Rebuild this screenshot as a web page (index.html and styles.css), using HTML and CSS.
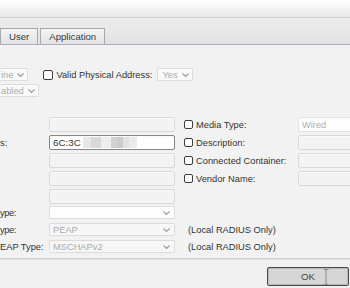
FILE: index.html
```html
<!DOCTYPE html>
<html lang="en">
<head>
    <meta charset="UTF-8">
    <meta name="viewport" content="width=device-width, initial-scale=1.0">
    <title>Endpoint Details</title>
    <link rel="stylesheet" href="styles.css">
</head>
<body>
    <div class="titlebar"></div>

    <div class="tabbar">
        <div class="tab">User</div>
        <div class="tab">Application</div>
    </div>

    <div class="panel">
        <div class="status">
            <div class="status-row">
                <span class="select">ine <svg class="chev" viewBox="0 0 7 4"><polyline points="0.5,0.5 3.5,3.5 6.5,0.5"/></svg></span>
                <span class="check check-gap"></span>
                <span class="label">Valid Physical Address:</span>
                <span class="select select-gap">Yes <svg class="chev" viewBox="0 0 7 4"><polyline points="0.5,0.5 3.5,3.5 6.5,0.5"/></svg></span>
            </div>
            <div class="status-row">
                <span class="select">abled <svg class="chev" viewBox="0 0 7 4"><polyline points="0.5,0.5 3.5,3.5 6.5,0.5"/></svg></span>
            </div>
        </div>

        <div class="fields">
            <div class="label"></div>
            <div class="input"></div>
            <div class="opt"><span class="check"></span>Media Type:</div>
            <div class="input input-light">Wired</div>

            <div class="label">s:</div>
            <div class="input input-focus">6C:3C <span class="blur"></span></div>
            <div class="opt"><span class="check"></span>Description:</div>
            <div class="input"></div>

            <div class="label"></div>
            <div class="input"></div>
            <div class="opt"><span class="check"></span>Connected Container:</div>
            <div class="input"></div>

            <div class="label"></div>
            <div class="input"></div>
            <div class="opt"><span class="check"></span>Vendor Name:</div>
            <div class="input"></div>

            <div class="label"></div>
            <div class="input"></div>
            <div></div>
            <div></div>
        </div>

        <div class="eap">
            <div class="label label-cut">ype:</div>
            <div class="select select-wide select-white"><span></span><svg class="chev" viewBox="0 0 7 4"><polyline points="0.5,0.5 3.5,3.5 6.5,0.5"/></svg></div>
            <div></div>

            <div class="label label-cut">ype:</div>
            <div class="select select-wide">PEAP <svg class="chev" viewBox="0 0 7 4"><polyline points="0.5,0.5 3.5,3.5 6.5,0.5"/></svg></div>
            <div class="note">(Local RADIUS Only)</div>

            <div class="label">EAP Type:</div>
            <div class="select select-wide">MSCHAPv2 <svg class="chev" viewBox="0 0 7 4"><polyline points="0.5,0.5 3.5,3.5 6.5,0.5"/></svg></div>
            <div class="note">(Local RADIUS Only)</div>
        </div>
    </div>

    <div class="footer">
        <button class="ok-btn">OK</button>
        <!-- mouse cursor sitting over the button -->
        <svg class="cursor" viewBox="0 0 6 16"><path d="M0.5 0.5h5M3 0.5v15M0.5 15.5h5"/></svg>
    </div>
</body>
</html>
```

FILE: styles.css
```css
* {
    box-sizing: border-box;
}
body {
    margin: 0;
    width: 350px;
    height: 288px;
    overflow: hidden;
    background-color: #f0f0f0;
    font-family: "Liberation Sans", Arial, sans-serif;
    font-size: 9.3px;
    color: #333;
}
.titlebar {
    height: 18px;
    background: linear-gradient(#fefefe, #e9e9e9);
    border-bottom: 1px solid #d0d0d0;
}
.tabbar {
    height: 27px;
    display: flex;
    align-items: flex-end;
    gap: 2px;
    background: linear-gradient(#ededed, #e2e2e2);
    border-bottom: 1px solid #a9b3bf;
}
.tab {
    height: 16px;
    padding: 0 8px;
    border: 1px solid #a8a8a8;
    border-bottom: none;
    background: linear-gradient(#f4f4f4, #e3e3e3);
    line-height: 15px;
    font-size: 9.6px;
    color: #3a3a3a;
}
.panel {
    background-color: #f2f2f2;
    padding: 23px 0 5px;
    border-bottom: 1px solid #cdcdcd;
    box-shadow: 0 1px 0 #e3e3e3;
}
.status {
    display: flex;
    flex-direction: column;
    gap: 3px;
    margin-left: -4px;
}
.status-row {
    display: flex;
    align-items: center;
    height: 13px;
}
.select {
    display: inline-flex;
    align-items: center;
    gap: 4px;
    height: 13px;
    padding: 0 3px 0 4px;
    border: 1px solid #dcdcdc;
    border-radius: 1px;
    background-color: #f9f9f9;
    color: #ababab;
}
.select-gap {
    margin-left: 5px;
}
.chev {
    width: 7px;
    height: 4px;
    fill: none;
    stroke: #9a9a9a;
    stroke-width: 1.1;
}
.check {
    display: inline-block;
    width: 10px;
    height: 10px;
    border: 1px solid #3d3d3d;
    border-radius: 2px;
    background-color: #fff;
    flex-shrink: 0;
}
.check-gap {
    margin: 0 3px 0 15px;
}
.fields, .eap {
    display: grid;
}
.fields {
    grid-template-columns: 49px 126px 123px 60px;
    margin-top: 20px;
    grid-auto-rows: 15px;
    row-gap: 3px;
}
.eap {
    grid-template-columns: 49px 126px 175px;
    margin-top: 2px;
    grid-auto-rows: 13px;
    row-gap: 4px;
}
.label {
    display: flex;
    align-items: center;
    white-space: nowrap;
}
.label-cut {
    letter-spacing: -0.4px;
}
.input {
    display: flex;
    align-items: center;
    padding: 0 3px;
    border: 1px solid #d9d9d9;
    border-radius: 2px;
    background-color: #f3f3f3;
    box-shadow: inset 0 1px 0 #fafafa;
    color: #b0b0b0;
}
.input-light {
    background-color: #fdfdfd;
    border-color: #e3e3e3;
}
.input-focus {
    border-color: #868686;
    background-color: #fff;
    color: #333;
    gap: 2px;
    font-size: 9.8px;
}
.blur {
    width: 54px;
    height: 11px;
    background: linear-gradient(90deg,
        #e7e7e7 0 8px, #d9d9d9 8px 18px, #eeeeee 18px 28px,
        #d3d3d3 28px 34px, #cbcbcb 34px 40px, #e1e1e1 40px 46px, #ebebeb 46px 54px);
}
.opt {
    display: flex;
    align-items: center;
    gap: 3px;
    padding-left: 9px;
    white-space: nowrap;
}
.opt .check {
    width: 9px;
    height: 9px;
}
.select-wide {
    display: flex;
    justify-content: space-between;
    padding: 0 4px 0 3px;
    background-color: #f7f7f7;
}
.select-white {
    background-color: #fdfdfd;
}
.note {
    display: flex;
    align-items: center;
    padding-left: 13px;
    white-space: nowrap;
}
.footer {
    position: relative;
    padding: 8px 0 0 267px;
}
.ok-btn {
    width: 82px;
    height: 19px;
    padding: 0;
    border: 1px solid #4a4a4a;
    border-radius: 2px;
    background-color: #d6d6d6;
    box-shadow: inset 0 0 0 1px #b8b8b8;
    font-family: "Liberation Sans", Arial, sans-serif;
    font-size: 9.6px;
    color: #444;
}
.cursor {
    position: absolute;
    left: 323px;
    top: 10px;
    width: 6px;
    height: 16px;
    fill: none;
    stroke: #8a8a8a;
    stroke-width: 1;
}
```
